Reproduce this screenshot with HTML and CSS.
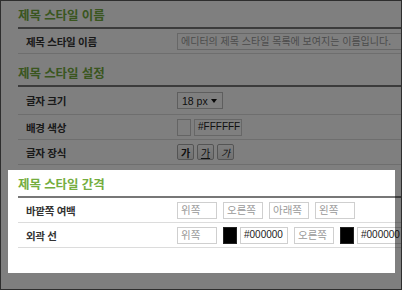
FILE: index.html
```html
<!DOCTYPE html>
<html lang="ko">
<head>
<meta charset="utf-8">
<link rel="stylesheet" href="styles.css">
</head>
<body>
<div class="frame">
  <div class="page">
    <section class="sec">
      <h2 class="sec-title">제목 스타일 이름</h2>
      <div class="table">
        <div class="row">
          <div class="label">제목 스타일 이름</div>
          <div class="cell"><span class="inp wide">에디터의 제목 스타일 목록에 보여지는 이름입니다.</span></div>
        </div>
      </div>
    </section>
    <section class="sec">
      <h2 class="sec-title">제목 스타일 설정</h2>
      <div class="table">
        <div class="row tall">
          <div class="label">글자 크기</div>
          <div class="cell"><span class="select"><span>18 px</span><span class="caret"></span></span></div>
        </div>
        <div class="row">
          <div class="label">배경 색상</div>
          <div class="cell"><span class="hexgrp"><span class="swatch"></span><span class="inp val">#FFFFFF</span></span></div>
        </div>
        <div class="row">
          <div class="label">글자 장식</div>
          <div class="cell btns"><span class="btn b">가</span><span class="btn u">가</span><span class="btn i">가</span></div>
        </div>
      </div>
    </section>
    <section class="sec">
      <h2 class="sec-title">제목 스타일 간격</h2>
      <div class="table">
        <div class="row">
          <div class="label">바깥쪽 여백</div>
          <div class="cell"><span class="inp">위쪽</span><span class="inp">오른쪽</span><span class="inp">아래쪽</span><span class="inp">왼쪽</span></div>
        </div>
        <div class="row">
          <div class="label">외곽 선</div>
          <div class="cell"><span class="inp">위쪽</span><span class="hexgrp"><span class="swatch black"></span><span class="inp val">#000000</span></span><span class="inp">오른쪽</span><span class="hexgrp"><span class="swatch black"></span><span class="inp val">#000000</span></span></div>
        </div>
      </div>
    </section>
  </div>
  <div class="spotlight"></div>
</div>
</body>
</html>
```
FILE: styles.css
```css
html, body {
  margin: 0;
  padding: 0;
  background: #555;
}

.frame {
  width: 402px;
  height: 290px;
  box-sizing: border-box;
  border: 1px solid #2e2e2e;
  position: relative;
  overflow: hidden;
  background: #fff;
  font-family: "Noto Sans CJK KR", sans-serif;
}

.page {
  padding: 6px 0 0 17px;
}

.sec + .sec {
  margin-top: 11px;
}

.sec-title {
  margin: 0;
  padding-bottom: 4px;
  font-size: 12.5px;
  line-height: 16px;
  font-weight: 700;
  color: #74ad3e;
  letter-spacing: -0.1px;
}

.table {
  border-top: 2px solid #777;
}

.row {
  display: flex;
  align-items: center;
  height: 24px;
  border-bottom: 1px solid #dcdcdc;
}

.row.tall {
  height: 27px;
}

.label {
  flex: none;
  width: 151px;
  padding-left: 8px;
  font-size: 10.5px;
  font-weight: 700;
  color: #333;
  letter-spacing: -0.3px;
  white-space: nowrap;
}

.cell {
  flex: none;
  display: flex;
  align-items: center;
  gap: 6px;
  white-space: nowrap;
}

.inp {
  box-sizing: border-box;
  width: 40px;
  height: 17px;
  flex: none;
  border: 1px solid #cfcfcf;
  padding: 0 3px;
  display: flex;
  align-items: center;
  font-size: 10.5px;
  line-height: 1;
  color: #999;
  background: #fff;
  white-space: nowrap;
  overflow: hidden;
}

.inp.wide {
  width: 260px;
  font-size: 10px;
}

.inp.val {
  width: 48px;
  padding: 0 3px;
  color: #222;
  font-family: "Liberation Sans", sans-serif;
  font-size: 10px;
}

.hexgrp {
  flex: none;
  display: flex;
  gap: 3px;
}

.swatch {
  box-sizing: border-box;
  width: 14px;
  height: 17px;
  border: 1px solid #c8c8c8;
  background: #fff;
}

.swatch.black {
  background: #000;
  border-color: #222;
}

.select {
  box-sizing: border-box;
  width: 46px;
  height: 17px;
  border: 1px solid #bdbdbd;
  display: flex;
  align-items: center;
  justify-content: space-between;
  padding: 0 5px 0 4px;
  font-family: "Liberation Sans", sans-serif;
  font-size: 10.5px;
  color: #222;
  background: #fff;
}

.caret {
  width: 0;
  height: 0;
  border-left: 3.5px solid transparent;
  border-right: 3.5px solid transparent;
  border-top: 4px solid #111;
}

.btns {
  gap: 3px;
}

.btn {
  box-sizing: border-box;
  width: 17px;
  height: 16px;
  border: 1px solid #a9a9a9;
  border-radius: 2px;
  background: linear-gradient(#ffffff, #e4e4e4);
  display: flex;
  align-items: center;
  justify-content: center;
  font-size: 10px;
  color: #222;
}

.btn.b {
  font-weight: 700;
}

.btn.u {
  text-decoration: underline;
}

.btn.i {
  font-style: italic;
}

.spotlight {
  position: absolute;
  left: 7px;
  top: 169px;
  width: 387px;
  height: 103px;
  box-shadow: 0 0 0 1000px rgba(0, 0, 0, 0.5);
  pointer-events: none;
}
```
